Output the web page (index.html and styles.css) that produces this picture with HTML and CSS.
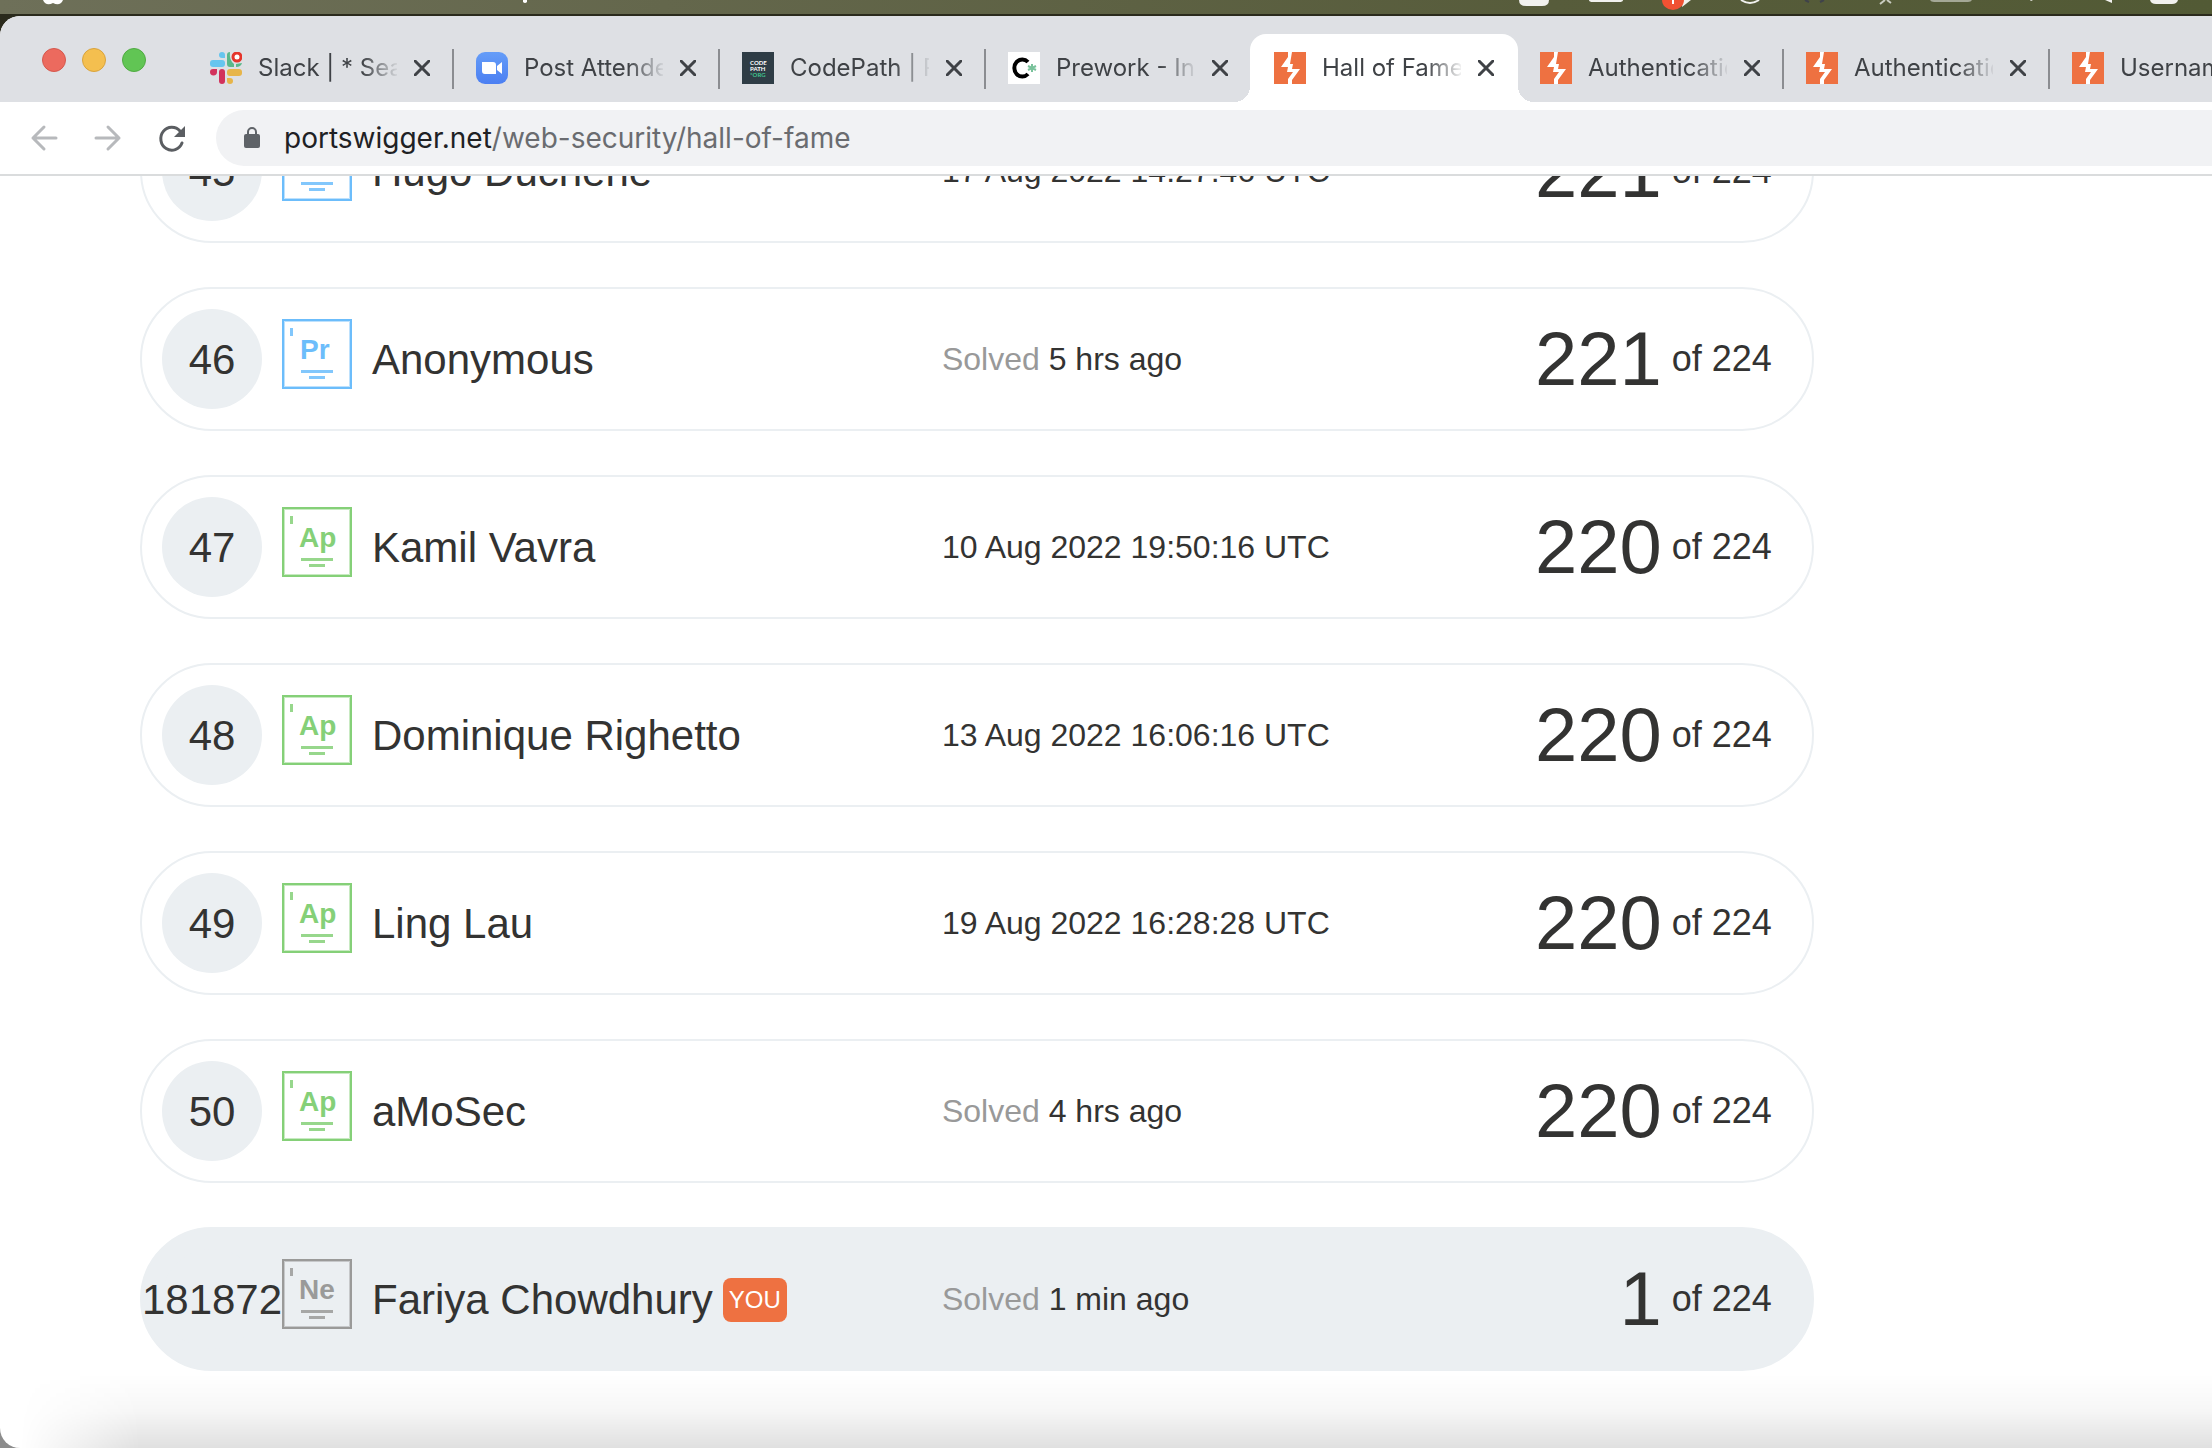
FILE: index.html
```html
<!DOCTYPE html>
<html lang="en">
<head>
<meta charset="utf-8">
<title>Hall of Fame</title>
<link rel="stylesheet" href="styles.css">
</head>
<body>
<svg class="defs" aria-hidden="true">
  <symbol id="close" viewBox="0 0 16 16"><path d="M1 1 15 15M15 1 1 15" fill="none" stroke="#3f4246" stroke-width="3" stroke-linecap="round"/></symbol>
  <symbol id="swigger" viewBox="0 0 32 32"><path fill="#ee7141" d="M0 0H32V32H0z"/><path fill="#fff" d="M14 0H18L17 6 16 12H19L18 17H26L18 28V32H14V27L19 20H13L14 15H7L14 5z"/></symbol>
  <symbol id="badge" viewBox="0 0 70 70"><path fill="none" stroke="currentColor" stroke-width="2" d="M1 1H69V69H1z"/><path fill="none" stroke="currentColor" stroke-opacity=".45" d="M2.500 2.500H67.500V67.500H2.500z"/><path fill="currentColor" fill-opacity=".85" d="M8 9H11V17H8zM19 51H51V54H19zM27 57H43V60H27z"/></symbol>
</svg>

<div class="menubar" aria-hidden="true">
  <svg width="560" height="14" viewBox="0 0 560 14"><path fill="#fff" d="M43 0C45 5 49 5 53 3 57 5 61 5 63 0z"/><path fill="#fff" d="M523 0H527V2Q525 4 523 2z"/></svg>
  <svg width="700" height="14" viewBox="0 0 700 14">
    <path fill="#f1f1ee" d="M7 0H37Q37 6 30 6H14Q7 6 7 0zM77 0H111Q111 2 107 2H81Q77 2 77 0z"/>
    <path fill="#f1f1ee" d="M170 7 179 0H171z"/><path fill="#f05133" d="M150 0H172A11 10 0 0 1 150 0z"/><path fill="#fff" d="M160 0H162V4H160z"/>
    <path fill="none" stroke="#f1f1ee" stroke-width="2" d="M229 0Q238 6 247 0"/>
    <path fill="none" stroke="#3f424a" stroke-width="2" d="M293 0 297 2M312 0 308 2"/>
    <path fill="none" stroke="#c9ccc0" stroke-width="2" d="M368 4 373 0M375 0 379 3"/>
    <path fill="#a4a896" d="M418 0H460Q459 2 456 2H422Q419 2 418 0z"/><path fill="#f1f1ee" d="M518 0H521L519 1zM593 0H600V3zM638 0H666Q665 4 660 4H644Q639 4 638 0z"/>
  </svg>
</div>

<div class="window">
  <header class="tabstrip">
    <div class="lights">
      <button class="light light-close" aria-label="Close window"></button>
      <button class="light light-min" aria-label="Minimise window"></button>
      <button class="light light-max" aria-label="Zoom window"></button>
    </div>
    <nav class="tabs" aria-label="Tabs">
      <div class="tab">
        <svg class="favicon" viewBox="0 0 32 32"><g fill="#67c5ee"><rect y="8" width="15" height="7" rx="3"/><path d="M12 0a3 3 0 0 1 3 3V6H12a3 3 0 0 1 0-6z"/></g><g fill="#5ab88a"><path d="M17 3Q17 0 20 0 19 8 24 12V15H20Q17 15 17 12zM26 12 32 11Q31 15 26 15z"/></g><g fill="#d2325c"><rect x="9" y="17" width="6" height="15" rx="3"/><path d="M0 20a3 3 0 0 1 3-3H7V20a3 3 0 0 1-7 0z"/></g><g fill="#e7b549"><rect x="17" y="17" width="15" height="7" rx="3"/><path d="M17 26H20a3 3 0 1 1-3 3z"/></g><circle cx="27" cy="5" r="4" fill="#fff" stroke="#e5352b" stroke-width="3"/></svg>
        <a class="title" href="#slack">Slack | * Sear</a>
        <button class="close" aria-label="Close tab"><svg><use href="#close"/></svg></button>
      </div>
      <div class="tab">
        <svg class="favicon" viewBox="0 0 32 32"><linearGradient id="zm" x2="0" y2="1"><stop stop-color="#659df8"/><stop offset="1" stop-color="#4b7ff2"/></linearGradient><rect width="32" height="32" rx="9" fill="url(#zm)"/><path fill="#fff" d="M6 10H17Q20 10 20 13V22H9Q6 22 6 19zM21 14 26 10V22L21 18z"/></svg>
        <a class="title" href="#post">Post Attendee</a>
        <button class="close" aria-label="Close tab"><svg><use href="#close"/></svg></button>
      </div>
      <div class="tab">
        <svg class="favicon" viewBox="0 0 32 32"><path fill="#2f3d46" d="M0 0H32V32H0z"/><g font-family="Lato, sans-serif" font-weight="700" font-size="6"><text x="8" y="13" fill="#fff">CODE</text><text x="8" y="19" fill="#fff">PATH</text><text x="8" y="25" fill="#3fc08c">*ORG</text></g></svg>
        <a class="title" href="#codepath">CodePath | Pr</a>
        <button class="close" aria-label="Close tab"><svg><use href="#close"/></svg></button>
      </div>
      <div class="tab">
        <svg class="favicon" viewBox="0 0 32 32"><path fill="#fff" d="M0 0H32V32H0z"/><path fill="none" stroke="#000" stroke-width="4" d="M20 10A8 8.500 0 1 0 20 22"/><path stroke="#79c29b" stroke-width="2" d="M24 12V20M20 14 28 18M28 14 20 18"/></svg>
        <a class="title" href="#prework">Prework - Intr</a>
        <button class="close" aria-label="Close tab"><svg><use href="#close"/></svg></button>
      </div>
      <div class="tab active">
        <svg class="favicon"><use href="#swigger"/></svg>
        <a class="title" href="#hall" aria-current="page">Hall of Fame</a>
        <button class="close" aria-label="Close tab"><svg><use href="#close"/></svg></button>
      </div>
      <div class="tab">
        <svg class="favicon"><use href="#swigger"/></svg>
        <a class="title" href="#auth1">Authentication</a>
        <button class="close" aria-label="Close tab"><svg><use href="#close"/></svg></button>
      </div>
      <div class="tab">
        <svg class="favicon"><use href="#swigger"/></svg>
        <a class="title" href="#auth2">Authentication</a>
        <button class="close" aria-label="Close tab"><svg><use href="#close"/></svg></button>
      </div>
      <div class="tab">
        <svg class="favicon"><use href="#swigger"/></svg>
        <a class="title" href="#user">Username</a>
      </div>
    </nav>
  </header>

  <div class="toolbar">
    <button class="tool" aria-label="Back"><svg viewBox="0 0 32 32"><path fill="none" stroke="#b7b9bc" stroke-width="3" stroke-linecap="round" stroke-linejoin="round" d="M28 16H5M16 5 5 16 16 27"/></svg></button>
    <button class="tool" aria-label="Forward"><svg viewBox="0 0 32 32"><path fill="none" stroke="#b7b9bc" stroke-width="3" stroke-linecap="round" stroke-linejoin="round" d="M4 16H27M16 5 27 16 16 27"/></svg></button>
    <button class="tool" aria-label="Reload"><svg viewBox="0 0 32 32"><path fill="none" stroke="#5b5e62" stroke-width="3" stroke-linecap="round" d="M26 21A11 11.500 0 1 1 24 9"/><path fill="#5b5e62" d="M29 4V15H18z"/></svg></button>
    <div class="omnibox">
      <svg class="lock" viewBox="0 0 16 22"><rect y="7" width="16" height="14" rx="2" fill="#5f6368"/><path fill="none" stroke="#5f6368" stroke-width="2" d="M4 8V5a4 4 0 0 1 8 0V8"/></svg>
      <div class="url" role="textbox" contenteditable="true" spellcheck="false" aria-label="Address">portswigger.net<span class="path">/web-security/hall-of-fame</span></div>
    </div>
  </div>

  <main class="page">
    <table class="board" aria-label="Hall of Fame">
      <tbody>
      <tr class="row"><td class="rank">45</td><td class="level pr"><svg viewBox="0 0 70 70"><use href="#badge"/><text x="18" y="40">Pr</text></svg></td><td class="name">Hugo Duchene</td><td class="time">17 Aug 2022 14:27:46 UTC</td><td class="score"><b>221</b> of 224</td></tr>
      <tr class="row"><td class="rank">46</td><td class="level pr"><svg viewBox="0 0 70 70"><use href="#badge"/><text x="18" y="40">Pr</text></svg></td><td class="name">Anonymous</td><td class="time"><span class="muted">Solved</span> 5 hrs ago</td><td class="score"><b>221</b> of 224</td></tr>
      <tr class="row"><td class="rank">47</td><td class="level ap"><svg viewBox="0 0 70 70"><use href="#badge"/><text x="17" y="40">Ap</text></svg></td><td class="name">Kamil Vavra</td><td class="time">10 Aug 2022 19:50:16 UTC</td><td class="score"><b>220</b> of 224</td></tr>
      <tr class="row"><td class="rank">48</td><td class="level ap"><svg viewBox="0 0 70 70"><use href="#badge"/><text x="17" y="40">Ap</text></svg></td><td class="name">Dominique Righetto</td><td class="time">13 Aug 2022 16:06:16 UTC</td><td class="score"><b>220</b> of 224</td></tr>
      <tr class="row"><td class="rank">49</td><td class="level ap"><svg viewBox="0 0 70 70"><use href="#badge"/><text x="17" y="40">Ap</text></svg></td><td class="name">Ling Lau</td><td class="time">19 Aug 2022 16:28:28 UTC</td><td class="score"><b>220</b> of 224</td></tr>
      <tr class="row"><td class="rank">50</td><td class="level ap"><svg viewBox="0 0 70 70"><use href="#badge"/><text x="17" y="40">Ap</text></svg></td><td class="name">aMoSec</td><td class="time"><span class="muted">Solved</span> 4 hrs ago</td><td class="score"><b>220</b> of 224</td></tr>
      <tr class="row self"><td class="rank">181872</td><td class="level ne"><svg viewBox="0 0 70 70"><use href="#badge"/><text x="17" y="40">Ne</text></svg></td><td class="name">Fariya Chowdhury<span class="you">YOU</span></td><td class="time"><span class="muted">Solved</span> 1 min ago</td><td class="score"><b>1</b> of 224</td></tr>
      </tbody>
    </table>
  </main>
</div>
</body>
</html>
```
FILE: styles.css
```css
* { box-sizing: border-box; }
body {
  margin: 0;
  height: 100vh;
  display: flex;
  flex-direction: column;
  overflow: hidden;
  background: linear-gradient(#2a2a1c 50%, #8c8c8c 50%);
  font-family: "Liberation Sans", Arial, sans-serif;
  color: #333332;
}
button { border: 0; padding: 0; background: none; }
svg { display: block; }
.defs { position: absolute; width: 0; height: 0; }

.menubar {
  height: 14px;
  margin-bottom: 2px;
  flex: none;
  display: flex;
  justify-content: space-between;
  background: linear-gradient(90deg, #6e7059, #64674c 30%, #575c3b 70%, #525a35);
}

.window {
  flex: 1;
  min-height: 0;
  display: flex;
  flex-direction: column;
  overflow: hidden;
  border-radius: 20px 0 0 20px;
  background: #fff;
}

.tabstrip {
  height: 86px;
  flex: none;
  display: flex;
  align-items: flex-end;
  background: #dee0e4;
  font-family: Inter, "Noto Sans", sans-serif;
}
.lights {
  width: 186px;
  height: 84px;
  flex: none;
  display: flex;
  gap: 16px;
  padding: 30px 0 0 42px;
}
.light { width: 24px; height: 24px; border-radius: 50%; border: 1px solid; }
.light-close { background: #ec6a5e; border-color: #d5584d; }
.light-min { background: #f4bf4f; border-color: #d9a33c; }
.light-max { background: #61c554; border-color: #50ab42; }

.tabs { display: flex; }
.tab {
  position: relative;
  width: 266px;
  height: 68px;
  flex: none;
  display: flex;
  align-items: center;
  padding-left: 24px;
}
.tab + .tab::before {
  content: "";
  position: absolute;
  left: 0;
  top: 15px;
  width: 2px;
  height: 40px;
  background: #8b8d91;
}
.tab.active {
  width: 268px;
  margin-right: -2px;
  background: #fff;
  border-radius: 16px 16px 0 0;
}
.tab.active::before, .tab.active::after {
  content: "";
  position: absolute;
  top: auto;
  bottom: 0;
  width: 16px;
  height: 16px;
}
.tab.active::before { left: -16px; background: radial-gradient(circle at 0 0, transparent 16px, #fff 16px); }
.tab.active::after { right: -16px; background: radial-gradient(circle at 100% 0, transparent 16px, #fff 16px); }
.tab.active + .tab::before { display: none; }
.favicon { width: 32px; height: 32px; flex: none; margin-right: 16px; }
.title {
  width: 139px;
  flex: none;
  overflow: hidden;
  white-space: nowrap;
  font-size: 24px;
  line-height: 32px;
  color: #3f4246;
  text-decoration: none;
  -webkit-mask-image: linear-gradient(90deg, #000 104px, transparent 142px);
  mask-image: linear-gradient(90deg, #000 104px, transparent 142px);
}
.close { margin-left: 17px; }
.close svg { width: 16px; height: 16px; }

.toolbar {
  height: 74px;
  flex: none;
  display: flex;
  align-items: center;
  gap: 32px;
  padding-left: 28px;
  border-bottom: 2px solid #dadcdd;
}
.tool, .tool svg { width: 32px; height: 32px; flex: none; }
.omnibox {
  flex: 1;
  height: 56px;
  margin-left: -4px;
  display: flex;
  align-items: center;
  gap: 24px;
  padding-left: 28px;
  border-radius: 28px 0 0 28px;
  background: #f1f2f4;
}
.lock { width: 16px; height: 22px; }
.url {
  font-family: Inter, "Noto Sans", sans-serif;
  font-size: 28px;
  line-height: 36px;
  white-space: nowrap;
  color: #202124;
}
.path { color: #6a6c70; }

.page {
  position: relative;
  flex: 1;
  min-height: 0;
  overflow: hidden;
  display: flex;
  flex-direction: column;
  justify-content: flex-end;
  padding: 0 18% 77px 140px;
}
.page::after {
  content: "";
  position: absolute;
  inset: auto 0 0 0;
  height: 74px;
  background: linear-gradient(transparent, rgba(0, 0, 0, .035) 50%, rgba(0, 0, 0, .12));
  -webkit-mask-image: linear-gradient(90deg, transparent 20px, #000 140px);
  mask-image: linear-gradient(90deg, transparent 20px, #000 140px);
  pointer-events: none;
}
.board, .board tbody { display: flex; flex-direction: column; }
.board tbody { gap: 44px; }
.row {
  height: 144px;
  display: grid;
  grid-template-columns: 100px 70px 55fr 57fr 240px;
  column-gap: 20px;
  align-items: center;
  padding: 0 40px 0 20px;
  border: 2px solid #ebeff2;
  border-radius: 72px;
  white-space: nowrap;
}
td { padding: 0; }
.self { background: #ebeff2; }
.rank {
  height: 100px;
  padding-top: 2px;
  display: flex;
  align-items: center;
  justify-content: center;
  border-radius: 50%;
  background: #ebeff2;
  font-size: 42px;
}
.level { padding-bottom: 10px; }
.level svg { width: 70px; height: 70px; }
.level text { font-size: 28px; font-weight: 700; fill: currentColor; }
.pr { color: #6cbdfb; }
.ap { color: #85d078; }
.ne { color: #9a9a99; }
.name {
  display: flex;
  align-items: center;
  gap: 10px;
  padding-top: 2px;
  font-size: 42px;
  line-height: 48px;
}
.you {
  padding: 0 6px;
  border-radius: 8px;
  background: #ee7141;
  color: #fff;
  font-size: 24px;
  line-height: 44px;
}
.time { font-size: 32px; line-height: 36px; }
.muted { color: #999; }
.score {
  display: flex;
  align-items: center;
  justify-content: flex-end;
  gap: 10px;
  font-size: 36px;
}
.score b { font-size: 76px; line-height: 86px; font-weight: 400; }
```
